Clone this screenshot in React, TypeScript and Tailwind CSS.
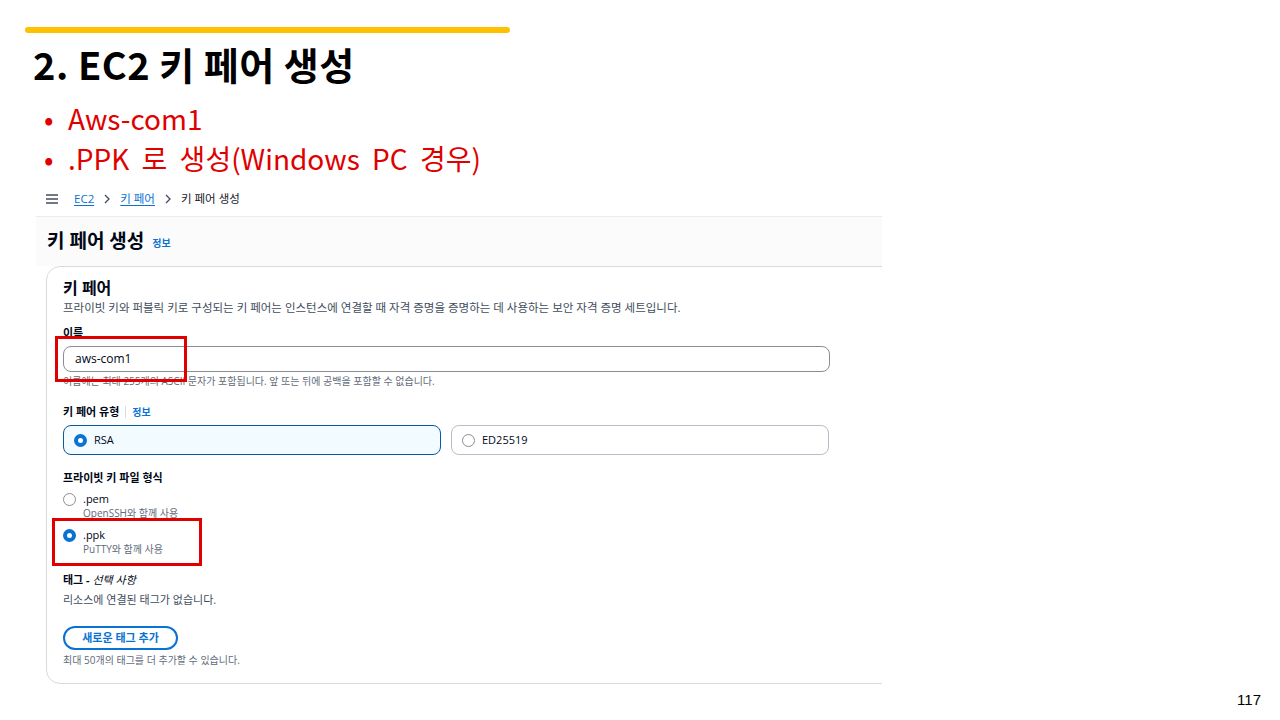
import React from "react";

const slideFont = { fontFamily: '"Noto Sans CJK KR", "Noto Sans", sans-serif' };
const uiFont = { fontFamily: '"Open Sans", "Noto Sans CJK KR", sans-serif' };

function Chevron() {
  return (
    <svg width="8" height="10" viewBox="0 0 8 10" className="mx-[9px]">
      <path d="M2 1l4 4-4 4" fill="none" stroke="#414d5c" strokeWidth="1.3" />
    </svg>
  );
}

function Radio({ checked }: { checked: boolean }) {
  return checked ? (
    <span className="block w-[13px] h-[13px] rounded-full border-[4px] border-[#0972d3] bg-white shrink-0" />
  ) : (
    <span className="block w-[13px] h-[13px] rounded-full border border-[#8c8c94] bg-white shrink-0" />
  );
}

export default function App() {
  return (
    <div className="relative w-[1280px] h-[720px] bg-white overflow-hidden" style={slideFont}>
      <div className="ml-[25px] mt-[27px] w-[485px] h-[6px] rounded-full bg-[#ffc000]" />
      <h1 className="ml-[33px] mt-[9px] text-[38px] leading-[44px] font-bold tracking-[0.5px] text-black">
        2. EC2 키 페어 생성
      </h1>
      <ul className="ml-[44px] mt-[12px] text-[28px] leading-[40px] text-[#e00000]">
        <li className="flex">
          <span className="w-[24px]">•</span>Aws-com1
        </li>
        <li className="flex [word-spacing:6px]">
          <span className="w-[24px]">•</span>.PPK 로 생성(Windows PC 경우)
        </li>
      </ul>

      <div className="ml-[36px] mt-[4px] w-[846px] overflow-hidden" style={uiFont}>
        <div className="h-[34px] flex items-center pl-[10px] text-[11.5px] text-[#16191f]">
          <svg width="12" height="10" viewBox="0 0 12 10" className="mr-[16px]">
            <path d="M0 1h12M0 5h12M0 9h12" stroke="#414d5c" strokeWidth="1.5" />
          </svg>
          <span className="text-[#0972d3] underline underline-offset-2">EC2</span>
          <Chevron />
          <span className="text-[#0972d3] underline underline-offset-2">키 페어</span>
          <Chevron />
          <span>키 페어 생성</span>
        </div>
        <div className="h-[50px] border-t border-[#e9ebed] bg-[#fbfbfb] flex items-center pl-[11px]">
          <span className="text-[19px] font-bold text-[#000716]">키 페어 생성</span>
          <span className="ml-[8px] mt-[4px] text-[10px] font-bold text-[#0972d3]">정보</span>
        </div>
        <div className="ml-[10px] w-[900px] rounded-[14px] border border-[#d5dbdb] pl-[16px] pt-[11px] pb-[16px] bg-white">
          <div className="text-[16px] leading-[20px] font-bold text-[#000716]">키 페어</div>
          <div className="mt-[2px] text-[11.5px] leading-[16px] text-[#414d5c]">
            프라이빗 키와 퍼블릭 키로 구성되는 키 페어는 인스턴스에 연결할 때 자격 증명을 증명하는 데 사용하는 보안 자격 증명 세트입니다.
          </div>
          <div className="mt-[9px] text-[11px] leading-[16px] font-bold text-[#000716]">이름</div>
          <div className="mt-[5px] w-[767px] h-[26px] rounded-[8px] border border-[#8c8c94] flex items-center pl-[11px] text-[12px] text-[#000716]">
            aws-com1
          </div>
          <div className="mt-[2px] text-[10px] leading-[14px] text-[#5f6b7a]">
            이름에는 최대 255개의 ASCII 문자가 포함됩니다. 앞 또는 뒤에 공백을 포함할 수 없습니다.
          </div>
          <div className="mt-[16px] flex items-center text-[11px] leading-[16px] font-bold text-[#000716]">
            키 페어 유형
            <span className="mx-[6px] h-[12px] border-l border-[#d5dbdb]" />
            <span className="text-[10px] text-[#0972d3]">정보</span>
          </div>
          <div className="mt-[5px] flex gap-[10px]">
            <div className="w-[378px] h-[30px] rounded-[8px] border-[1.5px] border-[#0a5a9e] bg-[#f2fbff] flex items-center pl-[10px] gap-[7px] text-[11px] text-[#000716]">
              <Radio checked />
              RSA
            </div>
            <div className="w-[378px] h-[30px] rounded-[8px] border border-[#b6bec9] flex items-center pl-[10px] gap-[7px] text-[11px] text-[#000716]">
              <Radio checked={false} />
              ED25519
            </div>
          </div>
          <div className="mt-[15px] text-[11px] leading-[16px] font-bold text-[#000716]">프라이빗 키 파일 형식</div>
          <div className="mt-[6px] flex gap-[7px]">
            <div className="pt-[1px]">
              <Radio checked={false} />
            </div>
            <div>
              <div className="text-[11px] leading-[14px] text-[#000716]">.pem</div>
              <div className="text-[10px] leading-[14px] text-[#5f6b7a]">OpenSSH와 함께 사용</div>
            </div>
          </div>
          <div className="mt-[8px] flex gap-[7px]">
            <div className="pt-[1px]">
              <Radio checked />
            </div>
            <div>
              <div className="text-[11px] leading-[14px] text-[#000716]">.ppk</div>
              <div className="text-[10px] leading-[14px] text-[#5f6b7a]">PuTTY와 함께 사용</div>
            </div>
          </div>
          <div className="mt-[16px] text-[11px] leading-[16px] font-bold text-[#000716]">
            태그 - <i className="font-normal">선택 사항</i>
          </div>
          <div className="mt-[4px] text-[11px] leading-[16px] text-[#414d5c]">리소스에 연결된 태그가 없습니다.</div>
          <div className="mt-[18px] w-[115px] h-[24px] rounded-full border-[2px] border-[#0972d3] flex items-center justify-center text-[11px] font-bold text-[#0972d3]">
            새로운 태그 추가
          </div>
          <div className="mt-[3px] text-[10px] leading-[14px] text-[#5f6b7a]">최대 50개의 태그를 더 추가할 수 있습니다.</div>
        </div>
      </div>

      <div className="absolute left-[55px] top-[336px] w-[132px] h-[46px] border-[3px] border-[#e00000]" />
      <div className="absolute left-[52px] top-[518px] w-[150px] h-[48px] border-[3px] border-[#e00000]" />

      <div className="absolute right-[19px] top-[689px] text-[15px] text-black" style={{ fontFamily: '"Liberation Sans", sans-serif' }}>
        117
      </div>
    </div>
  );
}
